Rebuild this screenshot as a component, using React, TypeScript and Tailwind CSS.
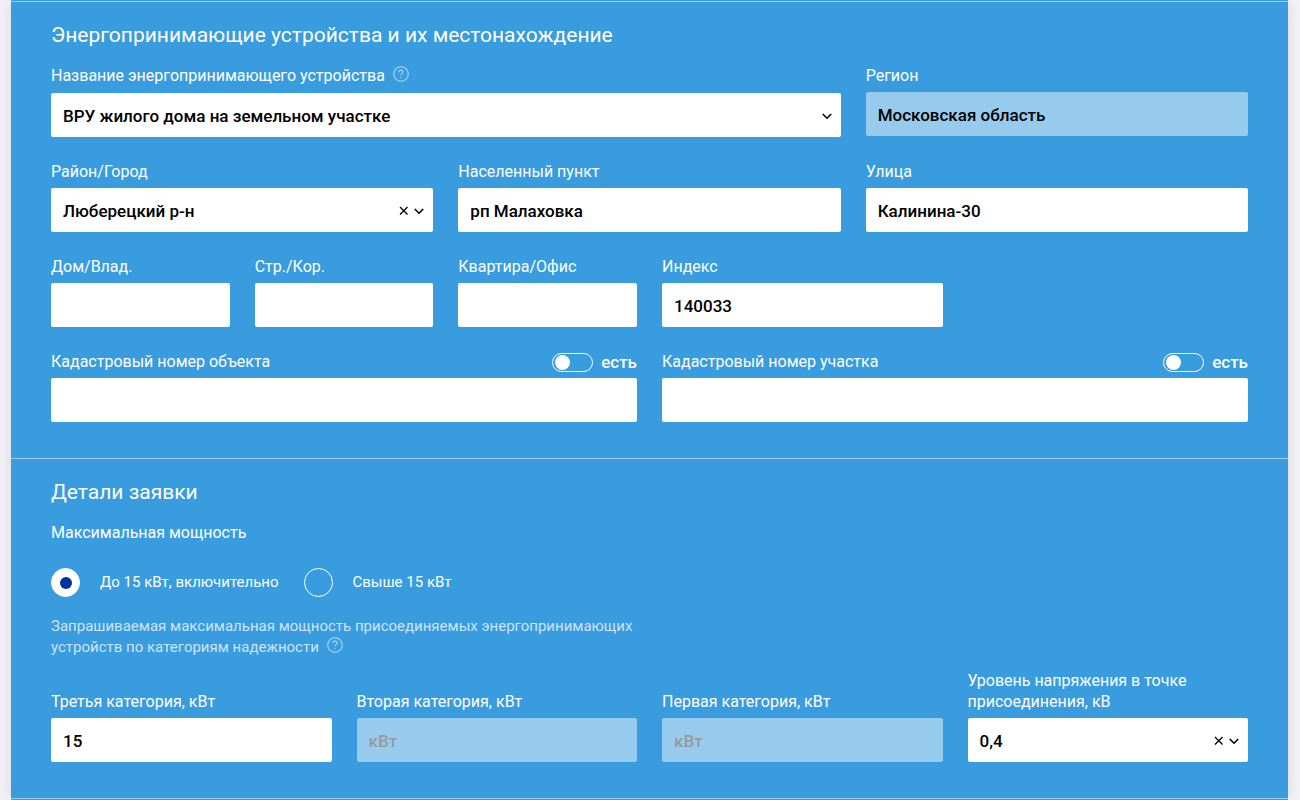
import React from 'react';

const fieldBase = 'block w-full h-11 rounded-xs px-3 pt-0.5 text-[17px] font-medium text-black outline-none';

interface FieldProps {
    id: string;
    label: string;
    className?: string;
    value?: string;
    placeholder?: string;
    disabled?: boolean;
    extra?: React.ReactNode;
}

const HelpIcon: React.FC = () => (
    <svg width="16" height="16" viewBox="0 0 16 16" fill="none" stroke="currentColor" strokeWidth="1.1">
        <circle cx="8" cy="8" r="7.3" />
        <path d="M5.9 6.3c0-1.4.9-2.2 2.1-2.2s2.1.8 2.1 2c0 1.5-2.1 1.6-2.1 3.2" />
        <path d="M8 10.7v1.3" />
    </svg>
);

const HelpButton: React.FC = () => (
    <button type="button" aria-label="Подсказка" className="inline-block align-middle ml-2 -mt-1.5 text-white/60">
        <HelpIcon />
    </button>
);

const TextField: React.FC<FieldProps> = ({ id, label, className, value, placeholder, disabled, extra }) => (
    <div className={className}>
        <div className="flex items-center justify-between mb-1.5">
            <label htmlFor={id}>{label}</label>
            {extra}
        </div>
        <input
            id={id}
            type="text"
            defaultValue={value}
            placeholder={placeholder}
            disabled={disabled}
            className={`${fieldBase} placeholder:text-[#999] ${disabled ? 'bg-[#97cbee]' : 'bg-white'}`}
        />
    </div>
);

interface SelectFieldProps {
    id: string;
    label: string;
    className?: string;
    options: string[];
    help?: boolean;
    clearable?: boolean;
}

const SelectField: React.FC<SelectFieldProps> = ({ id, label, className, options, help, clearable }) => {
    const [value, setValue] = React.useState(options[0]);

    return (
        <div className={className}>
            <div className={help ? 'mb-1.5 leading-[22px]' : 'mb-1.5'}>
                <label htmlFor={id}>{label}</label>
                {help && <HelpButton />}
            </div>
            <div className="relative">
                <select
                    id={id}
                    value={value}
                    onChange={(e) => setValue(e.target.value)}
                    className={`${fieldBase} appearance-none bg-white`}
                >
                    <option value="" />
                    {options.map((option) => (
                        <option key={option} value={option}>{option}</option>
                    ))}
                </select>
                <div className="pointer-events-none absolute inset-y-0 right-2 flex items-center gap-1 pt-0.5 text-black">
                    {clearable && (
                        <button
                            type="button"
                            aria-label="Очистить"
                            onClick={() => setValue('')}
                            className="pointer-events-auto"
                        >
                            <svg width="11" height="12" viewBox="0 0 11 12" fill="none" stroke="currentColor" strokeWidth="1.3">
                                <path d="M2 2l7.5 7.5M9.5 2L2 9.5" />
                            </svg>
                        </button>
                    )}
                    <svg width="12" height="10" viewBox="0 0 12 10" fill="none" stroke="currentColor" strokeWidth="1.6">
                        <path d="M1.8 3l4.2 4.2L10.2 3" />
                    </svg>
                </div>
            </div>
        </div>
    );
};

const Toggle: React.FC<{ id: string }> = ({ id }) => (
    <div className="flex items-center gap-2 h-[21px] pt-0.5">
        <input
            id={id}
            type="checkbox"
            role="switch"
            className="appearance-none flex items-center w-[41px] h-[19px] px-0.5 rounded-full border border-white before:block before:size-[15px] before:rounded-full before:bg-white checked:justify-end"
        />
        <label htmlFor={id} className="text-[17px] font-medium">есть</label>
    </div>
);

const PowerOption: React.FC<{ id: string; label: string; checked?: boolean }> = ({ id, label, checked }) => (
    <div className="flex items-center gap-5">
        <input
            id={id}
            type="radio"
            name="power"
            defaultChecked={checked}
            className="appearance-none flex items-center justify-center size-[29px] rounded-full border border-white checked:bg-white checked:before:block checked:before:size-3 checked:before:rounded-full checked:before:bg-[#0033a0]"
        />
        <label htmlFor={id} className="text-[15px]">{label}</label>
    </div>
);

const Section: React.FC<{ title?: string; children?: React.ReactNode }> = ({ title, children }) => (
    <section className="border-t border-white/50 px-10 pt-[19px] pb-9 last:grow last:p-0">
        {title && <h2 className="text-[21px] leading-7 mb-4">{title}</h2>}
        {children}
    </section>
);

export default function App() {
    return (
        <div className="min-h-screen flex bg-[#f3f3f8] pl-[11px] pr-3 font-['Roboto','Liberation_Sans',sans-serif] text-base leading-[21px] text-white">
            <form className="grow flex flex-col bg-[#389cdf] pt-px shadow-[0_0_16px_rgba(0,0,0,0.12)]">
                <Section title="Энергопринимающие устройства и их местонахождение">
                    <div className="grid grid-cols-12 gap-x-[25px] gap-y-6">
                        <SelectField
                            id="device"
                            label="Название энергопринимающего устройства"
                            className="col-span-8"
                            options={['ВРУ жилого дома на земельном участке']}
                            help
                        />
                        <TextField id="region" label="Регион" className="col-span-4" value="Московская область" disabled />

                        <SelectField id="district" label="Район/Город" className="col-span-4" options={['Люберецкий р-н']} clearable />
                        <TextField id="locality" label="Населенный пункт" className="col-span-4" value="рп Малаховка" />
                        <TextField id="street" label="Улица" className="col-span-4" value="Калинина-30" />

                        <TextField id="house" label="Дом/Влад." className="col-span-2" />
                        <TextField id="building" label="Стр./Кор." className="col-span-2" />
                        <TextField id="flat" label="Квартира/Офис" className="col-span-2" />
                        <TextField id="zip" label="Индекс" className="col-span-3" value="140033" />

                        <TextField
                            id="object-number"
                            label="Кадастровый номер объекта"
                            className="col-span-6 col-start-1"
                            extra={<Toggle id="object-has" />}
                        />
                        <TextField
                            id="plot-number"
                            label="Кадастровый номер участка"
                            className="col-span-6"
                            extra={<Toggle id="plot-has" />}
                        />
                    </div>
                </Section>

                <Section title="Детали заявки">
                    <fieldset>
                        <legend>Максимальная мощность</legend>
                        <div className="flex gap-[25px] mt-[25px]">
                            <PowerOption id="power-low" label="До 15 кВт, включительно" checked />
                            <PowerOption id="power-high" label="Свыше 15 кВт" />
                        </div>
                    </fieldset>
                    <p className="max-w-[586px] mt-[19px] text-[15px] text-white/75">
                        Запрашиваемая максимальная мощность присоединяемых энергопринимающих устройств по категориям надежности
                        <HelpButton />
                    </p>
                    <div className="grid grid-cols-4 items-end gap-x-[25px] mt-3">
                        <TextField id="third" label="Третья категория, кВт" value="15" />
                        <TextField id="second" label="Вторая категория, кВт" placeholder="кВт" disabled />
                        <TextField id="first" label="Первая категория, кВт" placeholder="кВт" disabled />
                        <SelectField
                            id="voltage"
                            label="Уровень напряжения в точке присоединения, кВ"
                            options={['0,4']}
                            clearable
                        />
                    </div>
                </Section>

                <Section />
            </form>
        </div>
    );
}
